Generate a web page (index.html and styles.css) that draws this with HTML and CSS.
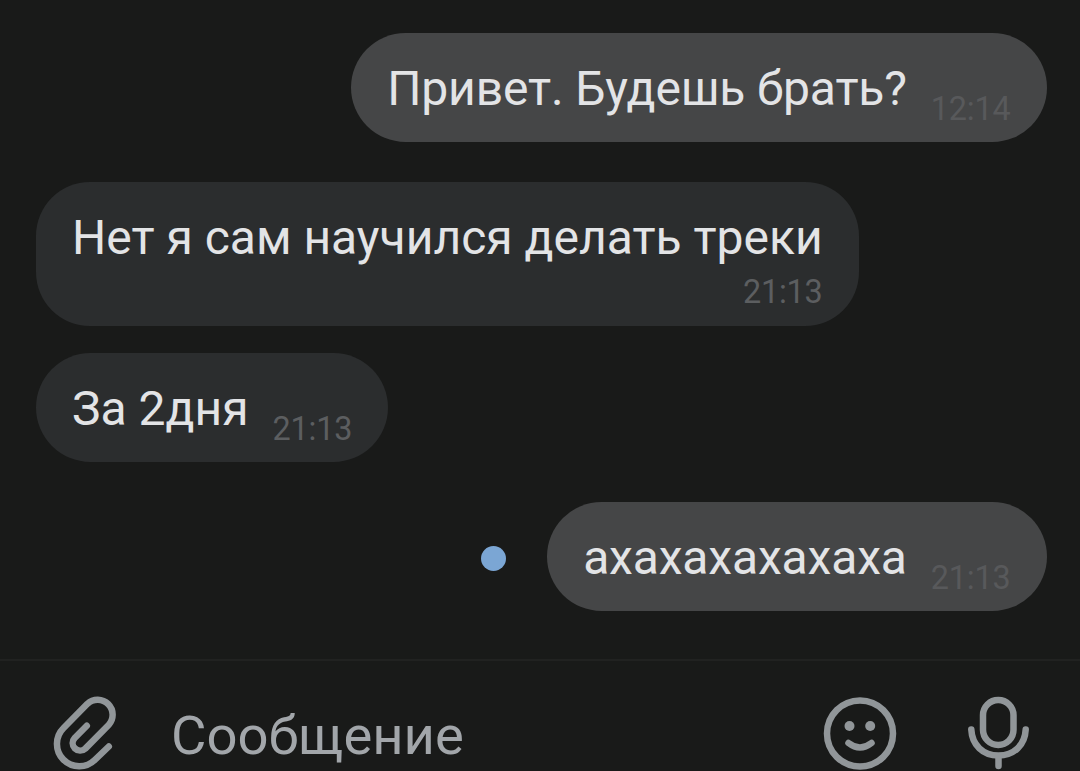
FILE: index.html
```html
<!DOCTYPE html>
<html lang="ru">
<head>
<meta charset="UTF-8">
<title>Сообщения</title>
<link rel="stylesheet" href="styles.css">
</head>
<body>
<main class="chat">
  <div class="row out">
    <div class="bubble"><span class="text">Привет. Будешь брать?</span><time>12:14</time></div>
  </div>
  <div class="row in">
    <div class="bubble long"><span class="text">Нет я сам научился делать треки</span><time>21:13</time></div>
  </div>
  <div class="row in">
    <div class="bubble"><span class="text">За 2дня</span><time>21:13</time></div>
  </div>
  <div class="row out last">
    <i class="unread"></i>
    <div class="bubble"><span class="text">ахахахахахаха</span><time>21:13</time></div>
  </div>
</main>
<footer class="composer">
  <svg class="icon clip" viewBox="0 0 100 86">
    <path d="M46.800 40.800 34.700 53A7.500 7.500 0 0 0 45.300 63.600L68.600 40A15 15 0 0 0 47.400 18.800L23.600 43A22.300 22.300 0 0 0 55 74.800L68.800 61.500"/>
  </svg>
  <span class="placeholder">Сообщение</span>
  <svg class="icon smile" viewBox="0 0 100 86">
    <circle cx="50" cy="48.500" r="33"/>
    <circle class="eye" cx="39.500" cy="41" r="5"/>
    <circle class="eye" cx="60.200" cy="41" r="5"/>
    <path d="M38.500 58Q50 67 61.500 58"/>
  </svg>
  <svg class="icon mic" viewBox="0 0 100 86">
    <rect x="33" y="15" width="30.500" height="45" rx="15.200"/>
    <path d="M21.300 44.500C22 60 33 70.500 48.500 70.500S75 60 75.700 44.500M48.500 71V81"/>
  </svg>
</footer>
</body>
</html>
```

FILE: styles.css
```css
:root {
  --bg: #191a19;
  --in: #2b2d2e;
  --out: #454647;
  --text: #e3e4e6;
  --icon: #919699;
}
* {
  box-sizing: border-box;
}
html, body {
  height: 100%;
  margin: 0;
  overflow: hidden;
}
body {
  display: flex;
  flex-direction: column;
  background: var(--bg);
  color: var(--text);
  font-family: Roboto, sans-serif;
}
.chat {
  height: 659px;
  flex: none;
  padding: 32.5px 33.5px 0 36px;
}
.row {
  display: flex;
  align-items: center;
  margin-bottom: 27px;
}
.row.out {
  justify-content: flex-end;
  margin-bottom: 39.5px;
}
.row.last {
  margin-top: 39.5px;
}
.bubble {
  display: flex;
  align-items: flex-start;
  gap: 24px;
  height: 109.5px;
  padding: 27px 36px 0;
  border-radius: 55px;
  background: var(--in);
  white-space: nowrap;
}
.out .bubble {
  background: var(--out);
}
.bubble.long {
  flex-direction: column;
  align-items: flex-end;
  gap: 0;
  height: 144px;
  border-radius: 54px;
}
.text {
  font-size: 48px;
  line-height: 58px;
}
.out .text {
  letter-spacing: -0.15px;
}
time {
  margin-top: 32px;
  font-size: 32.4px;
  line-height: 34px;
  letter-spacing: -0.2px;
  color: #5c5e60;
}
.out time {
  color: #58595b;
}
.long time {
  margin-top: 8px;
}
.unread {
  width: 25px;
  height: 25px;
  margin: 4px 41.5px 0 0;
  border-radius: 50%;
  background: #7ba6d4;
}
.composer {
  display: flex;
  flex: none;
  height: 112px;
  padding: 24px 30px 0 40px;
  border-top: 2px solid #212221;
}
.placeholder {
  flex: 1;
  padding-left: 31px;
  font-size: 54.4px;
  line-height: 64px;
  margin-top: 19px;
  color: #a2a6aa;
}
.icon {
  flex: none;
  width: 100px;
  height: 86px;
  fill: none;
  stroke: var(--icon);
  stroke-width: 6.5;
  stroke-linecap: round;
  stroke-linejoin: round;
}
.smile {
  margin-right: 40px;
}
.icon .eye {
  fill: var(--icon);
  stroke: none;
}
```
